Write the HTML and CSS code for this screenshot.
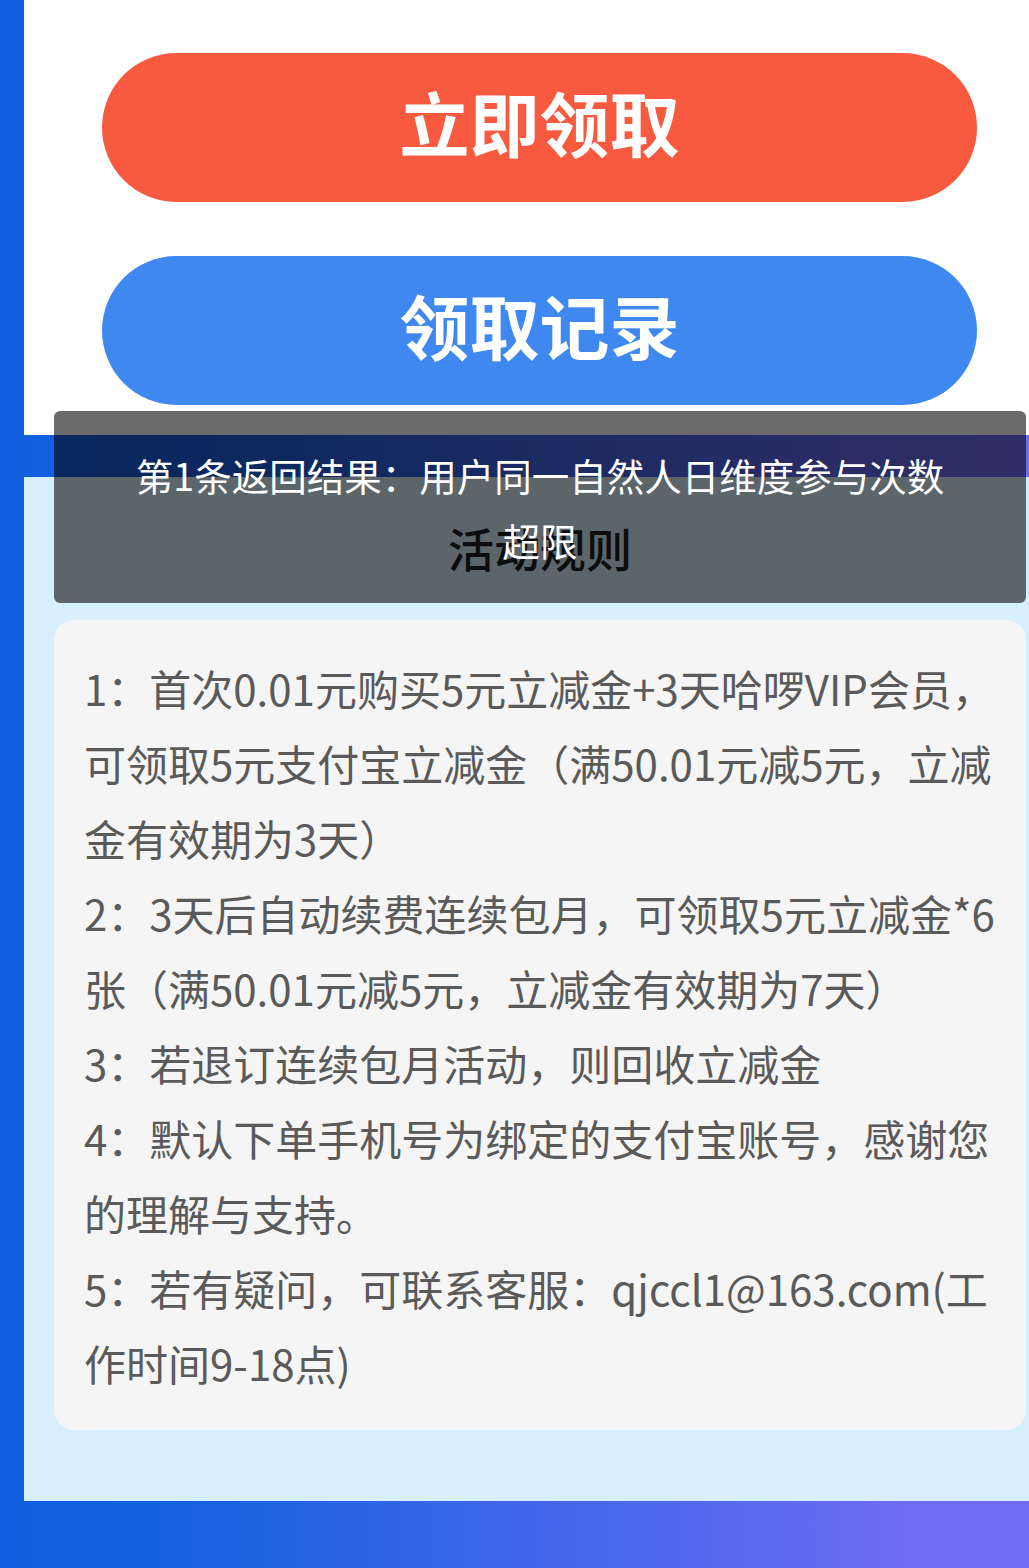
FILE: index.html
```html
<!DOCTYPE html>
<html lang="zh-CN">
<head>
    <meta charset="UTF-8">
    <meta name="viewport" content="width=1029, initial-scale=1.0, user-scalable=no">
    <title>活动领取</title>
    <link rel="stylesheet" href="styles.css">
</head>
<body>
    <div class="page">
        <div class="top-panel">
            <button class="btn btn-get">立即领取</button>
            <button class="btn btn-record">领取记录</button>
        </div>

        <div class="rules-panel">
            <div class="rules-title">活动规则</div>
            <div class="rules-card">
                <p>1：首次0.01元购买5元立减金+3天哈啰VIP会员，可领取5元支付宝立减金（满50.01元减5元，立减金有效期为3天）</p>
                <p>2：3天后自动续费连续包月，可领取5元立减金*6张（满50.01元减5元，立减金有效期为7天）</p>
                <p>3：若退订连续包月活动，则回收立减金</p>
                <p>4：默认下单手机号为绑定的支付宝账号，感谢您的理解与支持。</p>
                <p>5：若有疑问，可联系客服：qjccl1@163.com(工作时间9-18点)</p>
            </div>
        </div>

        <div class="toast">第1条返回结果：用户同一自然人日维度参与次数超限</div>
    </div>
</body>
</html>
```

FILE: styles.css
```css
html {
    overflow: hidden;
}

body {
    margin: 0;
    padding: 0 0 67px;
    font-family: "Noto Sans CJK SC", sans-serif;
    background: linear-gradient(90deg, #115fe0 0%, #1460e1 15%, #6c6cf4 88%, #6f6cf5 100%);
    min-height: 1568px;
    box-sizing: border-box;
    overflow: hidden;
}

.page {
    position: relative;
    width: 1032px;
    margin-left: 24px;
}

.top-panel {
    background: #ffffff;
    display: flex;
    flex-direction: column;
    gap: 54px;
    padding: 53px 79px 30px 78px;
}

.btn {
    width: 100%;
    height: 149px;
    padding: 0 0 12px;
    border: none;
    border-radius: 75px;
    color: #ffffff;
    font-family: "Noto Sans CJK SC", sans-serif;
    font-size: 70px;
    font-weight: 700;
    cursor: pointer;
}

.btn-get {
    background-color: #f85a40;
}

.btn-record {
    background-color: #3f88f0;
}

.rules-panel {
    margin-top: 42px;
    background: #d8f0fd;
    padding: 30px 30px 71px;
}

.rules-title {
    text-align: center;
    font-size: 46px;
    font-weight: 500;
    color: #1f1f1f;
    line-height: 80px;
    margin-bottom: 33px;
}

.rules-card {
    background: #f5f5f5;
    border-radius: 20px;
    padding: 30px 22px 30px 30px;
    font-size: 42px;
    line-height: 75px;
    color: #5a5a5a;
}

.rules-card p {
    margin: 0;
}

.toast {
    position: absolute;
    top: 411px;
    left: 30px;
    width: 972px;
    box-sizing: border-box;
    padding: 31px 66px;
    background: rgba(0, 0, 0, 0.58);
    border-radius: 6px;
    color: #ffffff;
    font-size: 37.5px;
    line-height: 65px;
    text-align: center;
}
```
